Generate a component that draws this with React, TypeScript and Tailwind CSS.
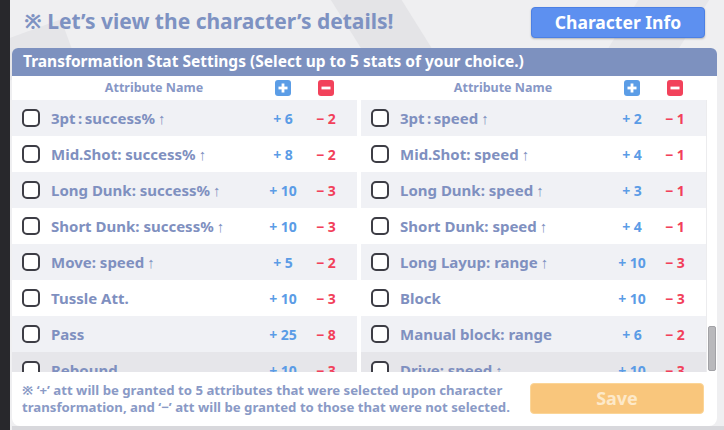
import React from "react";

type Row = [string, string, string, boolean?];

const left: Row[] = [
  ["3pt\u2009:\u2009success%", "+ 6", "− 2", true],
  ["Mid.Shot: success%", "+ 8", "− 2", true],
  ["Long Dunk: success%", "+ 10", "− 3", true],
  ["Short Dunk: success%", "+ 10", "− 3", true],
  ["Move: speed", "+ 5", "− 2", true],
  ["Tussle Att.", "+ 10", "− 3"],
  ["Pass", "+ 25", "− 8"],
  ["Rebound", "+ 10", "− 3"],
];

const right: Row[] = [
  ["3pt\u2009:\u2009speed", "+ 2", "− 1", true],
  ["Mid.Shot: speed", "+ 4", "− 1", true],
  ["Long Dunk: speed", "+ 3", "− 1", true],
  ["Short Dunk: speed", "+ 4", "− 1", true],
  ["Long Layup: range", "+ 10", "− 3", true],
  ["Block", "+ 10", "− 3"],
  ["Manual block: range", "+ 6", "− 2"],
  ["Drive: speed", "+ 10", "− 3", true],
];

function PlusIcon() {
  return (
    <div className="w-[16px] h-[16px] rounded-[3px] bg-[#5b9de6] flex items-center justify-center">
      <svg width="10" height="10" viewBox="0 0 10 10">
        <rect x="3.6" y="0.5" width="2.8" height="9" fill="#fff" />
        <rect x="0.5" y="3.6" width="9" height="2.8" fill="#fff" />
      </svg>
    </div>
  );
}

function MinusIcon() {
  return (
    <div className="w-[16px] h-[16px] rounded-[3px] bg-[#f2425b] flex items-center justify-center">
      <svg width="10" height="10" viewBox="0 0 10 10">
        <rect x="0.5" y="3.6" width="9" height="2.8" fill="#fff" />
      </svg>
    </div>
  );
}

function HeaderCol() {
  return (
    <div className="w-[345px] h-full flex items-center">
      <div className="w-[250px] pl-[34px] flex justify-center text-[12.5px] font-bold text-[#8797c6]">
        Attribute Name
      </div>
      <div className="w-[42px] flex justify-center">
        <PlusIcon />
      </div>
      <div className="w-[44px] flex justify-center">
        <MinusIcon />
      </div>
    </div>
  );
}

function Column({ rows }: { rows: Row[] }) {
  return (
    <div className="w-[345px] flex flex-col">
      {rows.map((r, i) => {
        const bg = i === 7 ? "bg-[#e6e6ea]" : i % 2 === 0 ? "bg-[#f0f1f5]" : "bg-white";
        return (
          <div key={i} className={`h-[36px] shrink-0 flex items-center ${bg}`}>
            <div className="w-[250px] flex items-center pl-[10px]">
              <div className="w-[18px] h-[18px] rounded-[5px] border-2 border-[#3d3d45] bg-white shrink-0" />
              <div className="ml-[11px] text-[15px] font-bold text-[#7f90c0] whitespace-nowrap">
                {r[0]}
                {r[3] ? <span className="font-normal ml-[3px]">↑</span> : null}
              </div>
            </div>
            <div className="w-[42px] flex justify-center text-[14px] font-bold text-[#5b9ce6] whitespace-nowrap">
              {r[1]}
            </div>
            <div className="w-[44px] flex justify-center text-[14px] font-bold text-[#f2405a] whitespace-nowrap">
              {r[2]}
            </div>
          </div>
        );
      })}
    </div>
  );
}

export default function App() {
  return (
    <div className="w-[724px] h-[430px] relative overflow-hidden bg-[#efeff1] font-['Noto_Sans',sans-serif] flex">
      {/* decorative background shapes */}
      <div className="absolute left-[380px] top-[-60px] w-[60px] h-[260px] bg-[#e4e4e7] rotate-[-32deg]" />
      <div className="absolute left-[600px] top-[-60px] w-[60px] h-[260px] bg-[#e7e7ea] rotate-[32deg]" />
      <div className="absolute left-[0px] top-[30px] w-[70px] h-[40px] bg-[#e5e5e8] rotate-[-20deg]" />

      <div className="w-[10px] h-full bg-[#28282c] shrink-0 relative" />
      <div className="flex-1 flex flex-col pl-[2px] relative">
        <div className="h-[48px] flex items-start justify-between shrink-0">
          <div className="pl-[12px] pt-[6px] leading-[30px] text-[21px] font-bold text-[#7e92c2] whitespace-nowrap">
            ※ Let’s view the character’s details!
          </div>
          <div className="mt-[7px] mr-[19px] w-[174px] h-[31px] rounded-[4px] bg-[#5d90f0] border border-[#4c80e4] shadow-[0_1px_2px_rgba(0,0,0,0.25)] flex items-center justify-center text-white text-[17.5px] font-bold">
            Character Info
          </div>
        </div>

        <div className="w-[705px] h-[378px] bg-white rounded-t-[6px] rounded-b-[8px] overflow-hidden flex flex-col shrink-0">
          <div className="h-[28px] shrink-0 bg-[#7d91bf] flex items-center pl-[11px] text-white text-[15.5px] font-bold whitespace-nowrap">
            Transformation Stat Settings (Select up to 5 stats of your choice.)
          </div>
          <div className="h-[24px] shrink-0 flex">
            <HeaderCol />
            <div className="w-[4px]" />
            <HeaderCol />
          </div>
          <div className="h-[272px] shrink-0 overflow-hidden flex">
            <Column rows={left} />
            <div className="w-[4px] bg-white" />
            <Column rows={right} />
            <div className="w-[11px] flex flex-col border-l border-[#ececee]">
              <div className="flex-1" />
              <div className="h-[45px] mx-[1px] mb-[1px] rounded-[2px] bg-[#b9b9bc] border border-[#a2a2a6]" />
            </div>
          </div>
          <div className="flex-1 flex justify-between">
            <div className="pl-[10px] pt-[10px] text-[13.2px] leading-[17px] font-bold text-[#8a9ac6] whitespace-nowrap">
              <div>※ ‘+’ att will be granted to 5 attributes that were selected upon character</div>
              <div>transformation, and ‘−’ att will be granted to those that were not selected.</div>
            </div>
            <div className="mt-[11px] mr-[13px] w-[174px] h-[31px] shrink-0 rounded-[4px] bg-[#f9c67c] border border-[#fbd597] flex items-center justify-center text-[#fde9c9] text-[18px] font-bold">
              Save
            </div>
          </div>
        </div>
        <div className="flex-1 bg-[#d8d8dc]" />
      </div>
    </div>
  );
}
